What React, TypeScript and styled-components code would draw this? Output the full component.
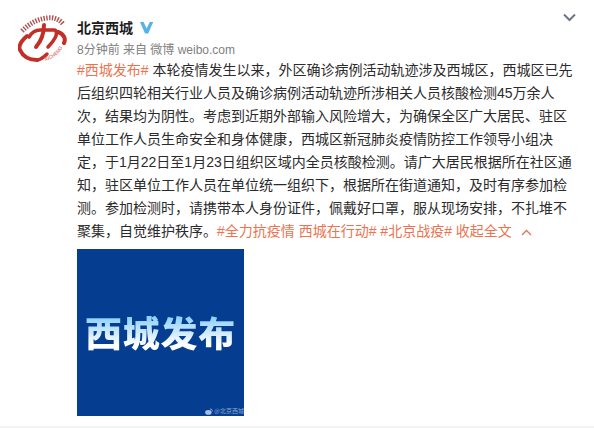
import React from 'react';
import styled, { createGlobalStyle } from 'styled-components';

const GlobalStyle = createGlobalStyle`
  html, body {
    margin: 0;
    background: #f3f3f3;
  }
`;

const Card = styled.article`
  position: relative;
  box-sizing: border-box;
  width: 594px;
  height: 426px;
  padding: 10px 20px 0 18px;
  background: #fff;
  color: #2b2b2b;
  font-family: "Liberation Sans", "Noto Sans CJK SC", sans-serif;
`;

const Header = styled.header`
  display: flex;
  gap: 10px;
  height: 49px;
`;

const Avatar = styled.svg`
  flex: none;
  width: 49px;
  height: 52px;
`;

const Meta = styled.div`
  display: flex;
  flex-direction: column;
  padding-top: 7px;
`;

const Name = styled.div`
  display: flex;
  align-items: center;
  gap: 6px;
  height: 20px;
  font-size: 14px;
  font-weight: 700;
  color: #1c1c1c;
`;

const From = styled.div`
  margin-top: 5px;
  font-size: 12px;
  line-height: 16px;
  color: #808080;
`;

const Chevron = styled.svg`
  position: absolute;
  top: 13px;
  right: 18px;
  width: 13px;
  height: 9px;
`;

const Body = styled.div`
  margin: 0 0 0 59px;
  font-size: 14px;
  line-height: 23px;
  white-space: nowrap;
`;

const Tag = styled.span`
  color: #eb7350;
`;

const Collapse = styled.svg`
  display: inline-block;
  width: 11px;
  height: 7px;
  margin-left: 9px;
`;

const Picture = styled.div`
  position: relative;
  display: flex;
  align-items: center;
  justify-content: center;
  width: 167px;
  height: 167px;
  margin: 6px 0 0 59px;
  background: #053e90;
  overflow: hidden;
`;

const PictureTitle = styled.span`
  margin-bottom: 1px;
  font-family: "Noto Sans CJK SC", sans-serif;
  font-size: 37px;
  font-weight: 900;
  line-height: 40px;
  white-space: nowrap;
  letter-spacing: 0.8px;
  transform: scaleY(0.94);
  background: linear-gradient(180deg, #8fd0fb 12%, #d4ecfd 55%, #ffffff 85%);
  -webkit-background-clip: text;
  background-clip: text;
  color: transparent;
`;

const Watermark = styled.div`
  position: absolute;
  right: 0;
  bottom: 1px;
  display: flex;
  align-items: center;
  gap: 1px;
  font-family: "Noto Sans CJK SC", sans-serif;
  font-size: 6px;
  line-height: 8px;
  color: #8ea6cc;
  white-space: nowrap;
`;

export default function App(): JSX.Element {
  return (
    <>
      <GlobalStyle />
      <Card>
        <Header>
          <Avatar viewBox="0 0 49 52">
            <g fill="none" stroke="#c22f26" strokeLinecap="round">
              <path d="M9 26 C3 31 1 35 1.5 39 C5 47 12 50 19 50" strokeWidth="4" />
              <path d="M19 50 C23 50 26 47 29 44" strokeWidth="3.5" />
              <path d="M40 22 C46 24 48 29 46 33" strokeWidth="4" />
              <path d="M11 27 C14 22 17 20 22 20 L36 20 C39 20 39 25 37 28 C35 32 33 34 30 37" strokeWidth="3.5" />
              <path d="M26 15 C26 24 24 30 18 37" strokeWidth="4" />
            </g>
            <path
              d="M4 21 C12 13 20 9 29 8 C35 7 41 9 45 14"
              fill="none"
              stroke="#b2504c"
              strokeWidth="5"
              strokeDasharray="1.4 1.4"
            />
            <path id="logo-arc" d="M27 51 C36 49 44 42 47 32" fill="none" />
            <text fontSize="5" fontWeight="700" fill="#d98a85" fontFamily="Liberation Sans, sans-serif">
              <textPath href="#logo-arc">XICHENG</textPath>
            </text>
          </Avatar>
          <Meta>
            <Name>
              北京西城
              <svg width="15" height="13" viewBox="0 0 15 13">
                <path d="M1 1 L4.6 1 L7.6 7.6 L10.8 1 L14.2 1 L9.2 12.4 L6 12.4 Z" fill="#54b3ea" />
              </svg>
            </Name>
            <From>8分钟前 来自 微博 weibo.com</From>
          </Meta>
        </Header>
        <Chevron viewBox="0 0 13 9">
          <path d="M1 1.5 L6.5 7 L12 1.5" fill="none" stroke="#6b7686" strokeWidth="2" />
        </Chevron>
        <Body>
          <Tag>#西城发布#</Tag> 本轮疫情发生以来，外区确诊病例活动轨迹涉及西城区，西城区已先
          <br />
          后组织四轮相关行业人员及确诊病例活动轨迹所涉相关人员核酸检测45万余人
          <br />
          次，结果均为阴性。考虑到近期外部输入风险增大，为确保全区广大居民、驻区
          <br />
          单位工作人员生命安全和身体健康，西城区新冠肺炎疫情防控工作领导小组决
          <br />
          定，于1月22日至1月23日组织区域内全员核酸检测。请广大居民根据所在社区通
          <br />
          知，驻区单位工作人员在单位统一组织下，根据所在街道通知，及时有序参加检
          <br />
          测。参加检测时，请携带本人身份证件，佩戴好口罩，服从现场安排，不扎堆不
          <br />
          聚集，自觉维护秩序。<Tag>#全力抗疫情 西城在行动#</Tag> <Tag>#北京战疫#</Tag> <Tag>收起全文</Tag>
          <Collapse viewBox="0 0 11 7">
            <path d="M1 6 L5.5 1.5 L10 6" fill="none" stroke="#eb7350" strokeWidth="1.4" />
          </Collapse>
        </Body>
        <Picture>
          <PictureTitle>西城发布</PictureTitle>
          <Watermark>
            <svg width="8" height="7" viewBox="0 0 8 7">
              <ellipse cx="3.4" cy="4.4" rx="3.2" ry="2.3" fill="#a9bedd" />
              <path d="M5 1 C6.6 0.8 7.6 2 7.2 3.4" fill="none" stroke="#a9bedd" strokeWidth="0.8" />
            </svg>
            @北京西城
          </Watermark>
        </Picture>
      </Card>
    </>
  );
}
